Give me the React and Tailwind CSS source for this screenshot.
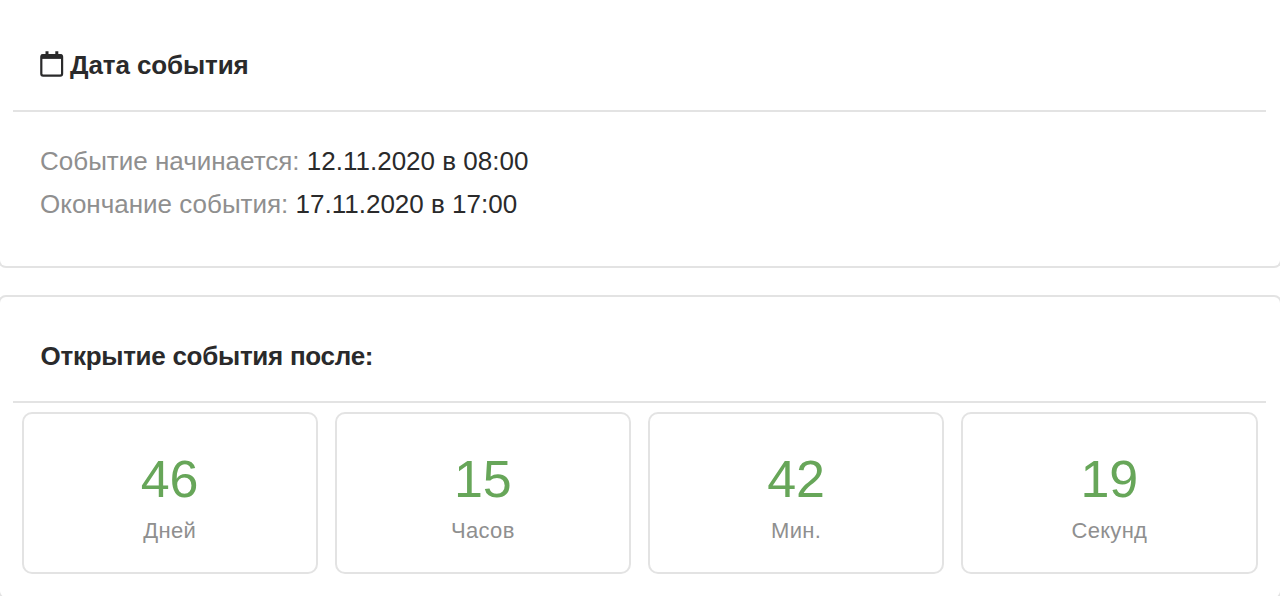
import React from "react";

const dates = [
  { label: "Событие начинается:", value: "12.11.2020 в 08:00" },
  { label: "Окончание события:", value: "17.11.2020 в 17:00" },
];

const timer = [
  { value: "46", label: "Дней" },
  { value: "15", label: "Часов" },
  { value: "42", label: "Мин." },
  { value: "19", label: "Секунд" },
];

function CalendarIcon() {
  return (
    <svg className="mb-[2px]" width="24" height="26" viewBox="0 0 24 26" fill="none" stroke="#2a2a2b" strokeWidth="2.2">
      <rect x="1.3" y="4" width="20.8" height="20.6" rx="1.8" />
      <path d="M1.3 5.7h20.8" strokeWidth="4.4" />
      <path d="M7 0.3v5M16.8 0.3v5" strokeWidth="3" />
    </svg>
  );
}

function DateRow({ label, value }) {
  return (
    <div className="h-[43px] leading-[43px] text-[26px] whitespace-nowrap">
      <span className="text-[#8f8f8f]">{label}</span>{" "}
      <span className="text-[#2a2a2b]">{value}</span>
    </div>
  );
}

function TimerCell({ value, label }) {
  return (
    <div className="h-[162px] pt-[35px] border-2 border-[#e3e3e3] rounded-[10px] text-center">
      <div className="text-[52px] leading-[60px] text-[#67a659]">{value}</div>
      <div className="mt-[8px] text-[22px] leading-[28px] tracking-[0.3px] text-[#8f8f8f]">{label}</div>
    </div>
  );
}

export default function App() {
  return (
    <div className="w-full h-[596px] overflow-hidden bg-white font-['Liberation_Sans',Arial,sans-serif] text-[#2a2a2b]">
      <div className="-mx-[2px] h-[268px] pl-[13px] pr-[14px] border-2 border-t-0 border-[#e3e3e3] rounded-b-[8px]">
        <div className="h-[112px] pt-[20px] px-[27px] flex items-center gap-[6px] border-b-2 border-[#e3e3e3]">
          <CalendarIcon />
          <h2 className="text-[26px] font-bold tracking-[-0.1px]">Дата события</h2>
        </div>
        <div className="pt-[28px] px-[27px]">
          {dates.map((d) => (
            <DateRow key={d.label} label={d.label} value={d.value} />
          ))}
        </div>
      </div>

      <div className="-mx-[2px] mt-[27px] h-[304px] pl-[13px] pr-[14px] border-2 border-[#e3e3e3] rounded-[8px]">
        <div className="h-[106px] pt-[15px] px-[27.5px] flex items-center border-b-2 border-[#e3e3e3]">
          <h2 className="text-[26px] font-bold tracking-[-0.28px]">Открытие события после:</h2>
        </div>
        <div className="mt-[9px] px-[8.5px] grid grid-cols-4 gap-[17px]">
          {timer.map((t) => (
            <TimerCell key={t.label} value={t.value} label={t.label} />
          ))}
        </div>
      </div>
    </div>
  );
}
